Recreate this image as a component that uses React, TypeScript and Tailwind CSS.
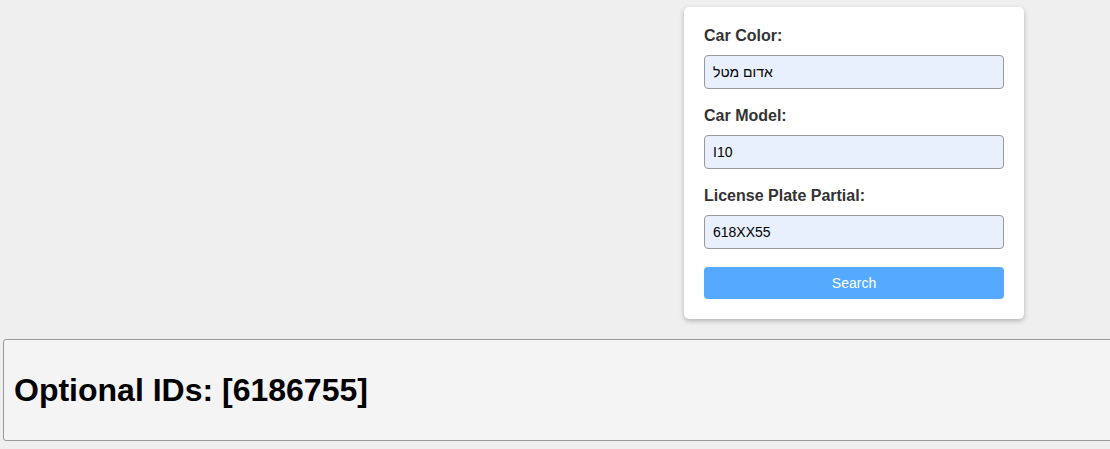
import React from "react";

const font = { fontFamily: '"Liberation Sans", Arial, sans-serif' };

function Field({ label, value }: { label: string; value: string }) {
  return (
    <div className="mb-[18px]">
      <label className="block mb-[10px] text-[16px] leading-[18px] font-bold text-[#333333]">{label}</label>
      <input
        readOnly
        value={value}
        className="block w-full h-[34px] px-[8px] text-[14px] text-black bg-[#e8f0fe] border border-[#999999] rounded-[4px] outline-none"
        style={font}
      />
    </div>
  );
}

export default function App() {
  return (
    <div className="min-h-[449px] w-full overflow-hidden bg-[#efefef]" style={font}>
      <div className="flex pt-[7px] pl-[684px]">
        <div className="w-[340px] bg-white rounded-[5px] p-[20px] shadow-[0_2px_5px_rgba(0,0,0,0.25)]">
          <Field label="Car Color:" value="אדום מטל" />
          <Field label="Car Model:" value="I10" />
          <Field label="License Plate Partial:" value="618XX55" />
          <button className="block w-full h-[32px] bg-[#55aaff] text-white text-[14px] rounded-[4px]" style={font}>
            Search
          </button>
        </div>
      </div>
      <div className="mt-[20px] ml-[3px] w-[1130px] h-[102px] bg-[#f4f4f4] border border-[#999999] rounded-[3px] p-[10px] flex items-center">
        <h1 className="text-[32px] font-bold text-black leading-[37px]">Optional IDs: [6186755]</h1>
      </div>
    </div>
  );
}
